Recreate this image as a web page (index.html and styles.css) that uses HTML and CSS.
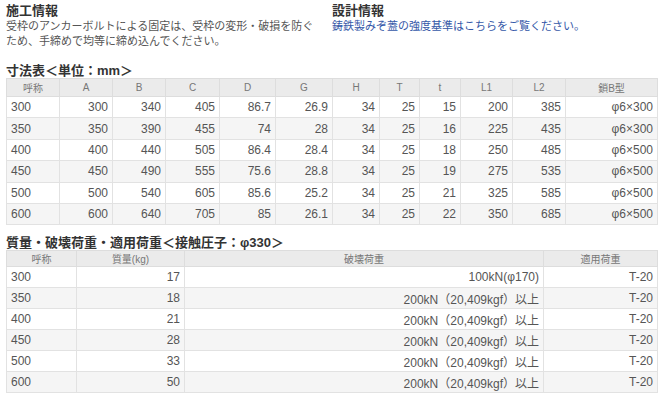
FILE: index.html
```html
<!DOCTYPE html>
<html lang="ja">
<head>
    <meta charset="UTF-8">
    <title>仕様</title>
    <link rel="stylesheet" href="styles.css">
</head>
<body>
    <div class="info">
        <div class="info-col">
            <h2>施工情報</h2>
            <p>受枠のアンカーボルトによる固定は、受枠の変形・破損を防ぐ<br>ため、手締めで均等に締め込んでください。</p>
        </div>
        <div class="info-col">
            <h2>設計情報</h2>
            <p><a href="#">鋳鉄製みぞ蓋の強度基準はこちらをご覧ください。</a></p>
        </div>
    </div>

    <h3>寸法表＜単位：mm＞</h3>
    <table class="spec size">
        <colgroup>
            <col style="width:53px"><col style="width:53px"><col style="width:53px"><col style="width:54px">
            <col style="width:56px"><col style="width:57px"><col style="width:47px"><col style="width:40px">
            <col style="width:41px"><col style="width:52px"><col style="width:53px"><col>
        </colgroup>
        <tr><th>呼称</th><th>A</th><th>B</th><th>C</th><th>D</th><th>G</th><th>H</th><th>T</th><th>t</th><th>L1</th><th>L2</th><th>鎖B型</th></tr>
        <tr><td>300</td><td>300</td><td>340</td><td>405</td><td>86.7</td><td>26.9</td><td>34</td><td>25</td><td>15</td><td>200</td><td>385</td><td>φ6×300</td></tr>
        <tr><td>350</td><td>350</td><td>390</td><td>455</td><td>74</td><td>28</td><td>34</td><td>25</td><td>16</td><td>225</td><td>435</td><td>φ6×300</td></tr>
        <tr><td>400</td><td>400</td><td>440</td><td>505</td><td>86.4</td><td>28.4</td><td>34</td><td>25</td><td>18</td><td>250</td><td>485</td><td>φ6×500</td></tr>
        <tr><td>450</td><td>450</td><td>490</td><td>555</td><td>75.6</td><td>28.8</td><td>34</td><td>25</td><td>19</td><td>275</td><td>535</td><td>φ6×500</td></tr>
        <tr><td>500</td><td>500</td><td>540</td><td>605</td><td>85.6</td><td>25.2</td><td>34</td><td>25</td><td>21</td><td>325</td><td>585</td><td>φ6×500</td></tr>
        <tr><td>600</td><td>600</td><td>640</td><td>705</td><td>85</td><td>26.1</td><td>34</td><td>25</td><td>22</td><td>350</td><td>685</td><td>φ6×500</td></tr>
    </table>

    <h3 class="second">質量・破壊荷重・適用荷重＜接触圧子：φ330＞</h3>
    <table class="spec load">
        <colgroup>
            <col style="width:70px"><col style="width:108px"><col style="width:359px"><col>
        </colgroup>
        <tr><th>呼称</th><th>質量(kg)</th><th>破壊荷重</th><th>適用荷重</th></tr>
        <tr><td>300</td><td>17</td><td>100kN(φ170)</td><td>T-20</td></tr>
        <tr><td>350</td><td>18</td><td>200kN（20,409kgf）以上</td><td>T-20</td></tr>
        <tr><td>400</td><td>21</td><td>200kN（20,409kgf）以上</td><td>T-20</td></tr>
        <tr><td>450</td><td>28</td><td>200kN（20,409kgf）以上</td><td>T-20</td></tr>
        <tr><td>500</td><td>33</td><td>200kN（20,409kgf）以上</td><td>T-20</td></tr>
        <tr><td>600</td><td>50</td><td>200kN（20,409kgf）以上</td><td>T-20</td></tr>
    </table>
</body>
</html>
```

FILE: styles.css
```css
body {
    margin: 0;
    padding: 3px 6px 0;
    font-family: "Liberation Sans", "Noto Sans CJK JP", sans-serif;
    color: #555;
    background: #fff;
}
.info {
    display: flex;
}
.info-col {
    width: 327px;
}
.info h2 {
    margin: 0;
    font-size: 13px;
    line-height: 15px;
    color: #333;
}
.info p {
    margin: 0;
    font-family: "Noto Sans CJK JP", sans-serif;
    font-size: 11px;
    line-height: 15px;
    color: #555;
}
.info a {
    color: #3558a8;
    text-decoration: none;
}
h3 {
    margin: 15px 0 0;
    font-size: 13px;
    line-height: 15px;
    color: #333;
}
h3.second {
    margin-top: 10px;
}
.spec {
    width: 652px;
    table-layout: fixed;
    border-collapse: collapse;
    border: 1px solid #ddd;
}
.spec th {
    height: 17px;
    padding: 0;
    background-color: #ebebeb;
    border: 1px solid #ddd;
    font-weight: normal;
    font-size: 10px;
    color: #777;
    text-align: center;
}
.spec td {
    height: 20px;
    padding: 0 4px;
    border: 1px solid #e2e2e2;
    font-size: 12px;
    text-align: right;
}
.size td {
    height: 20.4px;
}
.spec td:first-child {
    text-align: left;
}
.spec tr:nth-child(odd) td {
    background-color: #f5f5f5;
}
.load th {
    height: 15px;
}
```
